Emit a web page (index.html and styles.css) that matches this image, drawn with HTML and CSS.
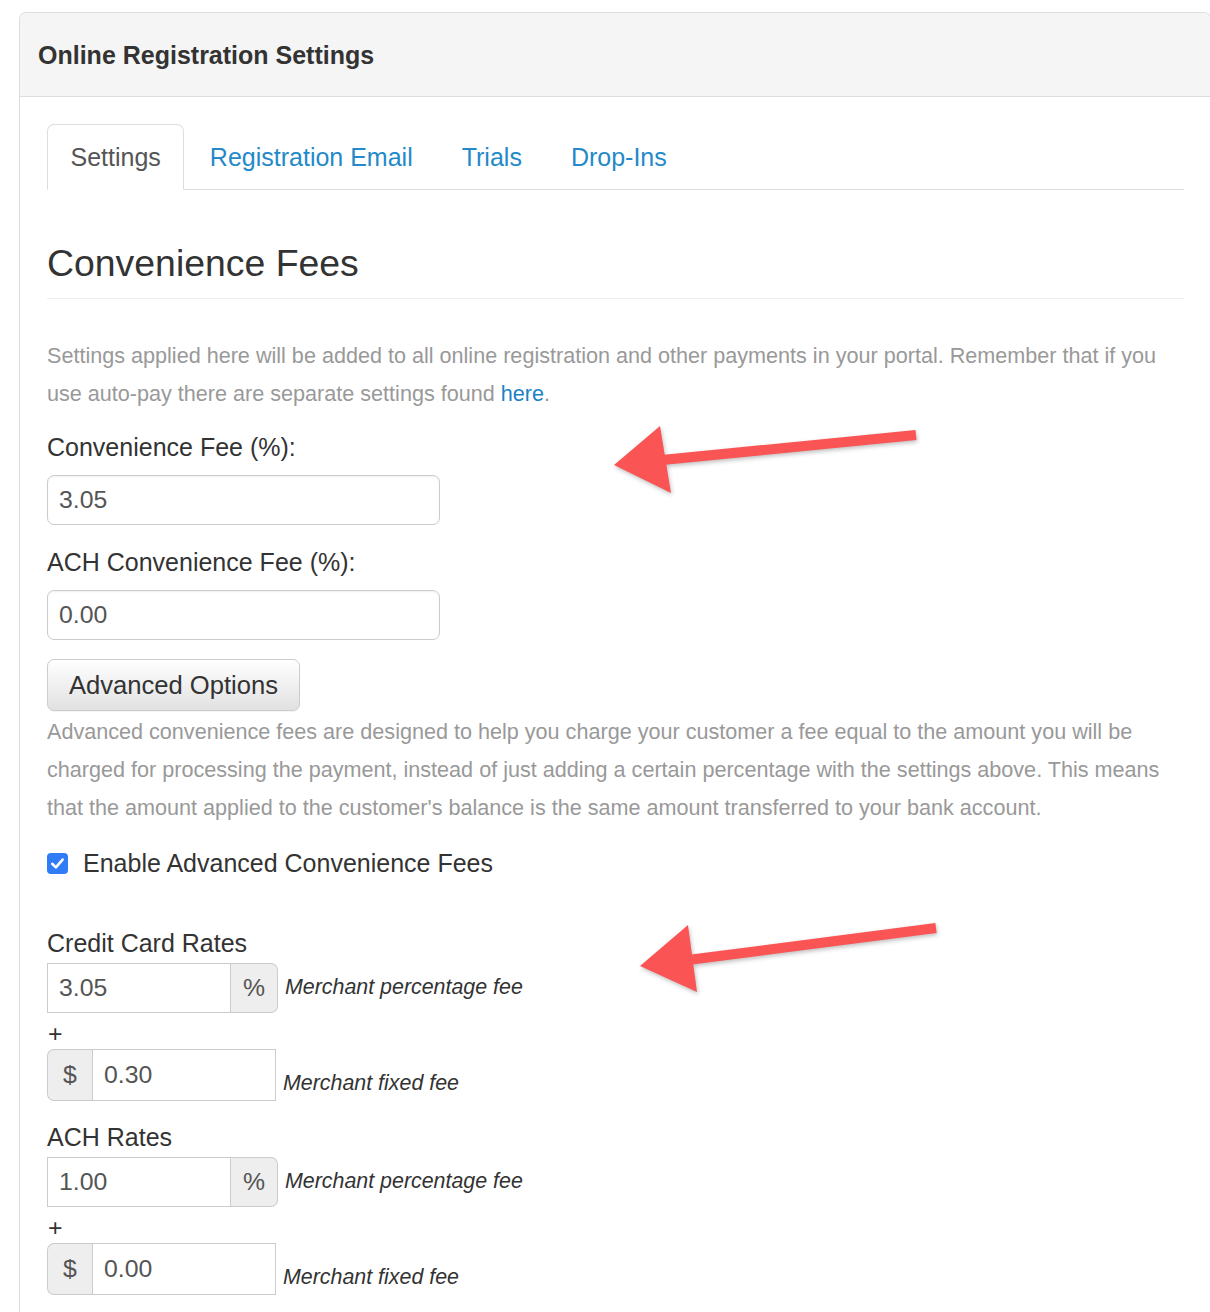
FILE: index.html
```html
<!DOCTYPE html>
<html lang="en">
<head>
<meta charset="utf-8">
<title>Online Registration Settings</title>
<link rel="stylesheet" href="styles.css">
</head>
<body>
<div class="panel">
  <div class="panel-heading">Online Registration Settings</div>
  <div class="panel-body">
    <ul class="tabs">
      <li class="tab active"><a>Settings</a></li>
      <li class="tab"><a>Registration Email</a></li>
      <li class="tab"><a>Trials</a></li>
      <li class="tab"><a>Drop-Ins</a></li>
    </ul>

    <h2 class="page-header">Convenience Fees</h2>

    <p class="help">Settings applied here will be added to all online registration and other payments in your portal. Remember that if you use auto-pay there are separate settings found <a class="link">here</a>.</p>

    <div class="form-group">
      <label class="label">Convenience Fee (%):</label>
      <div class="input">3.05</div>
    </div>
    <div class="form-group">
      <label class="label">ACH Convenience Fee (%):</label>
      <div class="input">0.00</div>
    </div>

    <button class="btn">Advanced Options</button>
    <p class="help help-tight">Advanced convenience fees are designed to help you charge your customer a fee equal to the amount you will be charged for processing the payment, instead of just adding a certain percentage with the settings above. This means that the amount applied to the customer's balance is the same amount transferred to your bank account.</p>

    <div class="check-row">
      <span class="checkbox"><svg viewBox="0 0 21 21" width="21" height="21"><path d="M5.2 10.8 L8.9 14.4 L15.6 6.6" fill="none" stroke="#fff" stroke-width="2.6" stroke-linecap="round" stroke-linejoin="round"/></svg></span>
      <span class="check-label">Enable Advanced Convenience Fees</span>
    </div>

    <div class="rates">
      <div class="rates-title">Credit Card Rates</div>
      <div class="rate-row">
        <div class="group group-pct">
          <div class="group-input">3.05</div>
          <div class="addon addon-right">%</div>
        </div>
        <span class="note">Merchant percentage fee</span>
      </div>
      <div class="plus">+</div>
      <div class="rate-row rate-row-low">
        <div class="group group-fixed">
          <div class="addon addon-left">$</div>
          <div class="group-input">0.30</div>
        </div>
        <span class="note note-low">Merchant fixed fee</span>
      </div>
    </div>

    <div class="rates">
      <div class="rates-title">ACH Rates</div>
      <div class="rate-row">
        <div class="group group-pct">
          <div class="group-input">1.00</div>
          <div class="addon addon-right">%</div>
        </div>
        <span class="note">Merchant percentage fee</span>
      </div>
      <div class="plus">+</div>
      <div class="rate-row rate-row-low">
        <div class="group group-fixed">
          <div class="addon addon-left">$</div>
          <div class="group-input">0.00</div>
        </div>
        <span class="note note-low">Merchant fixed fee</span>
      </div>
    </div>
  </div>
</div>

<svg class="arrows" width="1210" height="1312" viewBox="0 0 1210 1312">
  <g class="arrow">
    <line x1="916" y1="435" x2="662" y2="460" stroke="#fb5454" stroke-width="10"/>
    <polygon points="614,465 660,426 671,493" fill="#fb5454"/>
  </g>
  <g class="arrow">
    <line x1="936" y1="928" x2="688" y2="960" stroke="#fb5454" stroke-width="10"/>
    <polygon points="640,966 688,925 697,992" fill="#fb5454"/>
  </g>
</svg>
</body>
</html>
```

FILE: styles.css
```css
html, body {
  margin: 0;
  padding: 0;
  background: #fff;
  overflow: hidden;
}
body {
  font-family: "Liberation Sans", Arial, Helvetica, sans-serif;
  color: #333;
  position: relative;
  width: 1210px;
  height: 1312px;
}
.panel {
  margin: 12px 0 0 19px;
  width: 1192px;
  box-sizing: border-box;
  border: 1px solid #ddd;
  border-radius: 7px 7px 0 0;
  border-bottom: none;
  height: 1320px;
}
.panel-heading {
  background: #f5f5f5;
  border-bottom: 1px solid #ddd;
  border-radius: 7px 7px 0 0;
  padding: 1px 18px 0 18px;
  height: 82px;
  line-height: 83px;
  font-size: 25px;
  font-weight: bold;
  color: #333;
}
.panel-body {
  padding: 27px 26px 0 27px;
}
.tabs {
  list-style: none;
  margin: 0;
  padding: 0;
  display: flex;
  border-bottom: 1px solid #ddd;
}
.tab {
  margin: 0 2px -1px 0;
}
.tab a {
  display: block;
  padding: 14.5px 22.5px;
  line-height: 35px;
  font-size: 25px;
  color: #2489c9;
  border: 1px solid transparent;
  border-radius: 7px 7px 0 0;
}
.tab.active a {
  color: #555;
  background: #fff;
  border-color: #ddd;
  border-bottom-color: #fff;
}
.page-header {
  margin: 54px 0 0 0;
  padding-bottom: 15px;
  border-bottom: 1px solid #eee;
  font-size: 37.4px;
  font-weight: normal;
  line-height: 39px;
  color: #333;
}
.help {
  margin: 38px 0 17px 0;
  font-size: 21.6px;
  line-height: 38px;
  color: #999;
}
.help-tight {
  margin: 2px 0 19px 0;
}
.link {
  color: #1a83c6;
}
.form-group {
  margin-bottom: 19.5px;
}
.label {
  display: block;
  font-size: 25px;
  line-height: 35px;
  margin-bottom: 10px;
  color: #333;
}
.input {
  width: 393px;
  height: 50px;
  box-sizing: border-box;
  border: 1px solid #ccc;
  border-radius: 7px;
  padding: 0 11px;
  font-size: 24.8px;
  line-height: 48px;
  color: #555;
  box-shadow: inset 0 1px 2px rgba(0,0,0,0.06);
}
.btn {
  display: block;
  width: 253px;
  height: 52px;
  box-sizing: border-box;
  margin: 0;
  padding: 0;
  border: 1px solid #ccc;
  border-radius: 7px;
  background: linear-gradient(#ffffff, #e1e1e1);
  font-family: inherit;
  font-size: 25.6px;
  color: #333;
  text-align: center;
  box-shadow: 0 1px 1px rgba(0,0,0,0.05);
}
.check-row {
  display: flex;
  align-items: center;
  height: 35px;
}
.checkbox {
  width: 21px;
  height: 21px;
  border-radius: 4px;
  background: #2f7cf6;
  display: flex;
  margin-right: 15px;
}
.check-label {
  font-size: 25px;
  line-height: 35px;
  color: #333;
}
.rates {
  margin-top: 45px;
}
.rates + .rates {
  margin-top: 19.5px;
}
.rates-title {
  font-size: 25px;
  line-height: 35px;
  margin-bottom: 1.5px;
  color: #333;
}
.rate-row {
  display: flex;
  align-items: center;
}
.rate-row-low {
  align-items: flex-end;
}
.group {
  display: flex;
  height: 50px;
}
.group-pct {
  width: 231px;
}
.group-fixed {
  width: 229px;
  height: 52px;
}
.group-input {
  flex: 1;
  border: 1px solid #ccc;
  padding: 0 11px;
  font-size: 24.8px;
  line-height: 48px;
  color: #555;
  box-sizing: border-box;
}
.group-fixed .group-input {
  line-height: 50px;
}
.addon {
  width: 47px;
  box-sizing: border-box;
  background: #eee;
  border: 1px solid #ccc;
  text-align: center;
  font-size: 24.8px;
  line-height: 48px;
  color: #555;
}
.group-fixed .addon {
  width: 45px;
  line-height: 50px;
}
.addon-right {
  border-left: none;
  border-radius: 0 7px 7px 0;
}
.addon-left {
  border-right: none;
  border-radius: 7px 0 0 7px;
}
.note {
  margin-left: 7px;
  font-style: italic;
  font-size: 21.4px;
  line-height: 35px;
  color: #333;
}
.plus {
  font-size: 24.8px;
  height: 36px;
  line-height: 42px;
  color: #333;
  padding-left: 1px;
}
.arrows {
  position: absolute;
  left: 0;
  top: 0;
  pointer-events: none;
}
.arrow {
  filter: drop-shadow(1px 2px 2px rgba(0,0,0,0.25));
}
```
